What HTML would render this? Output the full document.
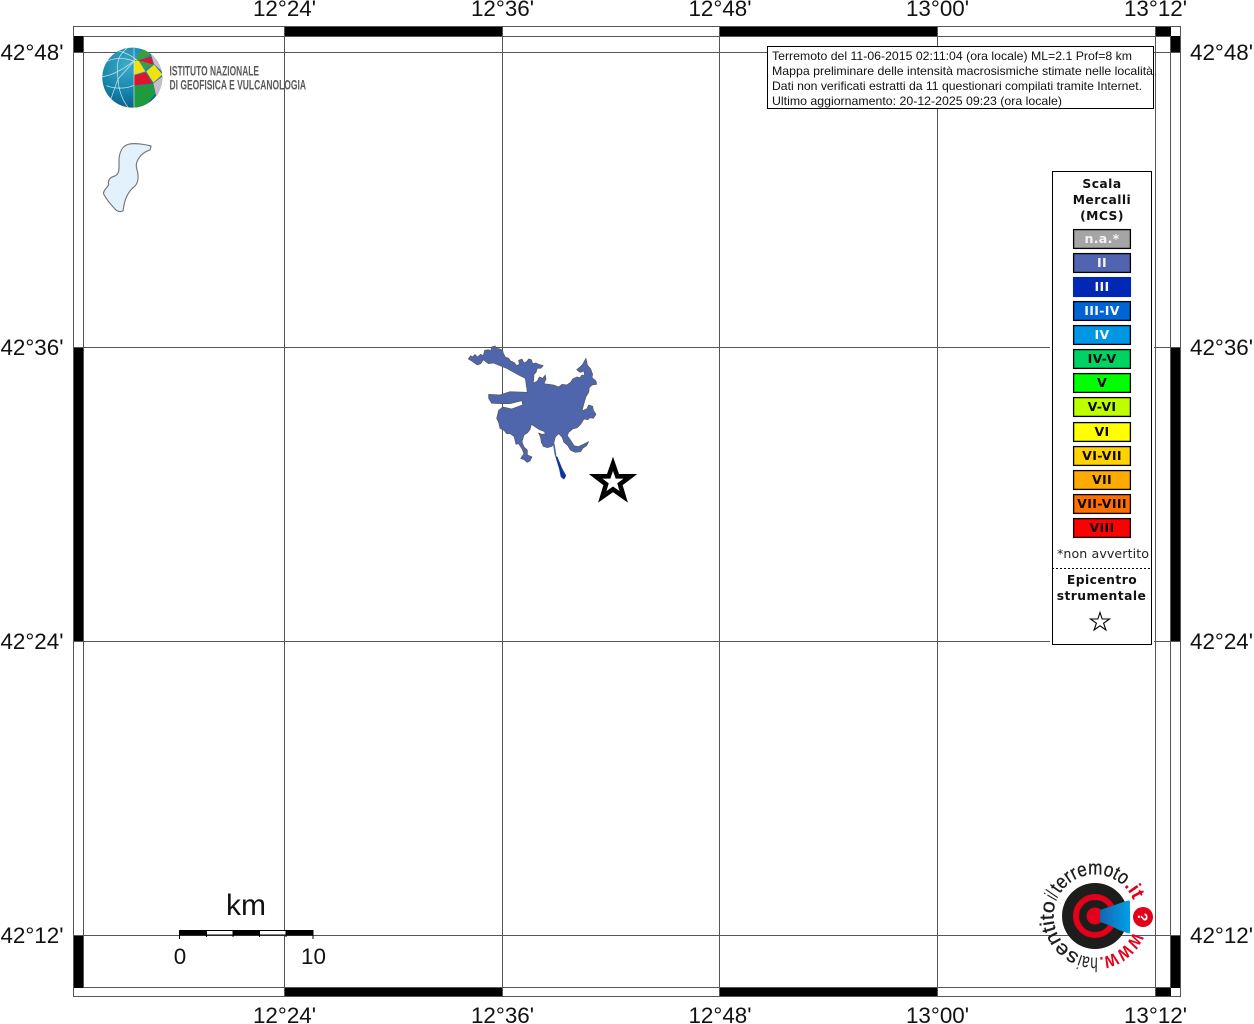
<!DOCTYPE html>
<html lang="it">
<head>
<meta charset="utf-8">
<title>Mappa intensità macrosismiche</title>
<style>
html,body{margin:0;padding:0;background:#fff;width:1254px;height:1024px;overflow:hidden}
svg{display:block;font-family:"Liberation Sans",sans-serif}
.lab{font-size:22.4px;fill:#111}
.info{font-size:12px;fill:#111}
.leg{font-family:"DejaVu Sans",sans-serif;font-weight:bold;font-size:12.3px;text-anchor:middle;letter-spacing:.45px}
.cell{font-family:"DejaVu Sans",sans-serif;font-weight:bold;font-size:12.6px;text-anchor:middle;letter-spacing:.3px}
</style>
</head>
<body>
<svg width="1254" height="1024" viewBox="0 0 1254 1024" xmlns="http://www.w3.org/2000/svg">
<defs>
<radialGradient id="gb" cx="40%" cy="30%" r="75%"><stop offset="0" stop-color="#3fabc8"/><stop offset=".6" stop-color="#1583ab"/><stop offset="1" stop-color="#0b5a85"/></radialGradient>
<linearGradient id="cone" x1="0" x2="1" y1="0" y2="0"><stop offset="0" stop-color="#1565b0"/><stop offset="1" stop-color="#00a0e6"/></linearGradient>
<clipPath id="gc"><circle cx="132.3" cy="77.6" r="30"/></clipPath>
<path id="a1" d="M1133.5 931.5 A41.5 41.5 0 0 1 1099.3 957.3"/>
<path id="a2" d="M1097.9 957.4 A41.5 41.5 0 0 1 1079.5 954.5"/>
<path id="a3" d="M1079.5 954.5 A41.5 41.5 0 0 1 1056.3 901.1"/>
<path id="a4" d="M1056.3 901.1 A41.5 41.5 0 0 1 1059.8 894"/>
<path id="a5" d="M1059.8 894 A41.5 41.5 0 0 1 1123.8 886.1"/>
<path id="a6" d="M1123.8 886.1 A41.5 41.5 0 0 1 1133.5 900.5"/>
</defs>

<!-- frame bars -->
<g fill="#000">
<rect x="284" y="26" width="218" height="10"/><rect x="720" y="26" width="217" height="10"/><rect x="1155" y="26" width="16" height="10"/>
<rect x="284" y="988" width="218" height="9"/><rect x="720" y="988" width="217" height="9"/><rect x="1155" y="988" width="16" height="9"/>
<rect x="74" y="36" width="9" height="16"/><rect x="74" y="347" width="9" height="294"/><rect x="74" y="935" width="9" height="53"/>
<rect x="1171" y="36" width="10" height="16"/><rect x="1171" y="347" width="10" height="294"/><rect x="1171" y="935" width="10" height="53"/>
</g>
<g fill="none" stroke="#555" stroke-width="1">
<rect x="73.5" y="26.5" width="1107" height="970"/>
<rect x="83.5" y="36.5" width="1087" height="951"/>
<path d="M284.5 26V997M502.5 26V997M719.5 26V997M937.5 26V997M1155.5 26V997"/>
<path d="M74 52.5H1181M74 347.5H1181M74 641.5H1181M74 935.5H1181"/>
</g>

<!-- coordinate labels -->
<g class="lab" text-anchor="middle">
<text x="284.5" y="16">12°24'</text><text x="502.5" y="16">12°36'</text><text x="720" y="16">12°48'</text><text x="937.5" y="16">13°00'</text><text x="1155.5" y="16">13°12'</text>
<text x="284.5" y="1023">12°24'</text><text x="502.5" y="1023">12°36'</text><text x="720" y="1023">12°48'</text><text x="937.5" y="1023">13°00'</text><text x="1155.5" y="1023">13°12'</text>
</g>
<g class="lab" text-anchor="end">
<text x="63.5" y="60">42°48'</text><text x="63.5" y="355">42°36'</text><text x="63.5" y="649">42°24'</text><text x="63.5" y="943">42°12'</text>
</g>
<g class="lab">
<text x="1190" y="60">42°48'</text><text x="1190" y="355">42°36'</text><text x="1190" y="649">42°24'</text><text x="1190" y="943">42°12'</text>
</g>

<!-- INGV logo -->
<circle cx="132.3" cy="77.6" r="30" fill="url(#gb)"/>
<g clip-path="url(#gc)">
<g transform="translate(98 44) scale(.3333)">
<path d="M108 52L135 15L160 30L125 48Z" fill="#3a9e3a"/>
<path d="M118 50L160 38L166 62L140 56Z" fill="#e0142c"/>
<path d="M158 28L195 65L195 85L168 60Z" fill="#c9bccb"/>
<path d="M108 52L122 50L142 82L108 92Z" fill="#f2e10f"/>
<path d="M125 50L166 62L142 74Z" fill="#3a9e3a"/>
<path d="M145 82L168 62L194 92L166 116Z" fill="#f2e10f"/>
<path d="M108 95L143 85L163 118L108 124Z" fill="#e0142c"/>
<path d="M166 118L196 95L192 135L174 155Z" fill="#c9bccb"/>
<path d="M108 126L166 120L172 150L140 190L108 195Z" fill="#1f9a3f"/>
<path d="M174 155L185 140L180 165Z" fill="#e0142c"/>
<g fill="none" stroke="#d8ecf1" stroke-width="2">
<path d="M108 10V195"/>
<path d="M108 52L60 105L35 175"/>
<path d="M88 12C60 35 55 50 60 105C62 140 75 170 90 190"/>
<path d="M108 52C80 40 45 40 22 55"/>
<path d="M115 45C85 70 45 95 12 98"/>
<path d="M108 124C85 135 50 135 25 125"/>
<path d="M60 20C90 28 105 38 118 50"/>
</g>
</g>
</g>
<text x="169.5" y="75.5" font-size="13.5" font-weight="bold" fill="#5a5a5a" textLength="89.5" lengthAdjust="spacingAndGlyphs">ISTITUTO NAZIONALE</text>
<text x="169.5" y="89.5" font-size="13.5" font-weight="bold" fill="#5a5a5a" textLength="136.5" lengthAdjust="spacingAndGlyphs">DI GEOFISICA E VULCANOLOGIA</text>

<!-- small lake -->
<path transform="translate(60 0) scale(.3333)" fill="#e2f1fb" stroke="#777" stroke-width="3.5" stroke-linejoin="round" d="M273 438C255 433 225 428 205 433C188 438 178 455 177 480C177 505 180 520 165 528C150 532 143 540 146 553C142 565 128 572 131 582C140 600 160 622 170 632C178 636 188 636 190 630C192 605 200 578 225 558C238 545 235 520 230 505C225 485 240 460 270 450Z"/>

<!-- intensity area -->
<g transform="translate(450 335) scale(.3333)">
<path fill="#4f66ad" stroke="#555" stroke-width="2" stroke-linejoin="round" d="M55 72L62 62L68 66L75 58L82 66L92 58L100 62L104 46L115 44L122 48L125 36L135 33L140 40L150 42L158 46L160 55L166 66L176 70L182 78L192 82L200 92L208 88L206 76L216 72L222 84L230 80L236 72L244 74L248 86L258 84L266 88L280 92L272 100L262 100L258 112L252 118L250 145L262 138L268 126L278 130L286 120L288 132L282 146L296 148L310 150L326 156L336 148L350 150L362 142L368 132L380 126L390 128L396 120L404 122L402 108L390 112L380 104L390 96L398 88L408 70L412 90L422 102L428 118L426 128L438 138L440 148L426 150L418 158L416 172L408 185L402 205L396 228L410 222L416 210L428 214L430 226L438 238L430 250L420 248L414 254L402 252L392 268L382 278L368 282L356 292L352 302L362 316L372 332L385 335L400 328L416 320L410 332L398 340L392 350L376 352L362 346L352 330L342 322L336 306L326 296L316 306L312 322L306 334L292 338L280 334L274 322L272 308L266 294L276 298L288 296L280 288L268 284L256 276L244 268L240 284L232 294L222 300L216 320L222 336L232 345L232 360L246 366L240 378L232 382L222 374L212 370L222 356L216 342L206 326L198 328L192 304L180 296L170 296L162 286L150 280L146 262L140 250L146 226L158 216L185 222L218 210L216 197L180 206L155 206L125 205L116 190L116 178L150 180L180 170L232 172L226 130L210 122L195 114L170 100L150 92L130 84L115 86L100 74L92 86L82 90L65 78Z"/>
<path fill="none" stroke="#4f66ad" stroke-width="5" d="M311 325L317 362"/>
<path fill="#0a35a8" stroke="#14284f" stroke-width="1" d="M316 362L322 366L336 400L348 422L342 433L333 426L328 402Z"/>
</g>

<!-- epicentre star -->
<path transform="translate(613 481) scale(.88) translate(-613 -481)" d="M613 461.5L617.9 475.6L632.7 475.7L620.9 484.7L625.2 499L613 490.5L600.8 499L605.1 484.7L593.3 475.7L608.1 475.6Z" fill="#fff" stroke="#000" stroke-width="5.3" stroke-linejoin="miter"/>

<!-- info box -->
<rect x="767.5" y="46.5" width="386" height="62" fill="#fff" stroke="#000" stroke-width="1"/>
<g class="info">
<text x="772" y="60" textLength="360" lengthAdjust="spacingAndGlyphs">Terremoto del 11-06-2015 02:11:04 (ora locale) ML=2.1 Prof=8 km</text>
<text x="772" y="75" textLength="381" lengthAdjust="spacingAndGlyphs">Mappa preliminare delle intensità macrosismiche stimate nelle località</text>
<text x="772" y="90" textLength="370" lengthAdjust="spacingAndGlyphs">Dati non verificati estratti da 11 questionari compilati tramite Internet.</text>
<text x="772" y="105" textLength="290" lengthAdjust="spacingAndGlyphs">Ultimo aggiornamento: 20-12-2025 09:23 (ora locale)</text>
</g>

<!-- legend -->
<rect x="1050" y="169" width="104" height="478" fill="#fff"/>
<rect x="1052.5" y="171.5" width="99" height="473" fill="#fff" stroke="#000" stroke-width="1"/>
<g class="leg" fill="#111">
<text x="1102" y="188">Scala</text><text x="1102" y="204">Mercalli</text><text x="1102" y="220">(MCS)</text>
</g>
<g stroke="#000" stroke-width="1.3">
<rect x="1073.6" y="229.6" width="56.8" height="18.8" fill="#a5a5a5"/>
<rect x="1073.6" y="253.6" width="56.8" height="18.8" fill="#5064af"/>
<rect x="1073.6" y="277.6" width="56.8" height="18.8" fill="#0028b4" stroke="#0028b4"/>
<rect x="1073.6" y="301.6" width="56.8" height="18.8" fill="#0064d2"/>
<rect x="1073.6" y="325.6" width="56.8" height="18.8" fill="#0096e6"/>
<rect x="1073.6" y="349.6" width="56.8" height="18.8" fill="#00d264"/>
<rect x="1073.6" y="373.6" width="56.8" height="18.8" fill="#00ff00"/>
<rect x="1073.6" y="397.6" width="56.8" height="18.8" fill="#beff00"/>
<rect x="1073.6" y="422.6" width="56.8" height="18.8" fill="#ffff00"/>
<rect x="1073.6" y="446.6" width="56.8" height="18.8" fill="#ffd200"/>
<rect x="1073.6" y="470.6" width="56.8" height="18.8" fill="#ffaa00"/>
<rect x="1073.6" y="494.6" width="56.8" height="18.8" fill="#ff6e00"/>
<rect x="1073.6" y="518.6" width="56.8" height="18.8" fill="#ff0000"/>
</g>
<g class="cell" fill="#f4f4f4">
<text x="1102" y="243">n.a.*</text><text x="1102" y="267">II</text><text x="1102" y="291">III</text><text x="1102" y="315">III-IV</text><text x="1102" y="339">IV</text>
</g>
<g class="cell" fill="#0a0a0a">
<text x="1102" y="363">IV-V</text><text x="1102" y="387">V</text><text x="1102" y="411">V-VI</text><text x="1102" y="436">VI</text><text x="1102" y="460">VI-VII</text><text x="1102" y="484">VII</text><text x="1102" y="508">VII-VIII</text><text x="1102" y="532">VIII</text>
</g>
<text x="1103" y="558" font-family="'DejaVu Sans',sans-serif" font-size="12.6" text-anchor="middle" fill="#222" textLength="92" lengthAdjust="spacing">*non avvertito</text>
<path d="M1052 568.5H1150" stroke="#000" stroke-width="1" stroke-dasharray="2 2"/>
<g class="leg" fill="#111">
<text x="1102" y="584">Epicentro</text><text x="1101.5" y="600">strumentale</text>
</g>
<path d="M1100 612.5L1102.2 619L1109.5 619L1103.6 623.2L1105.9 630L1100 625.8L1094.1 630L1096.4 623.2L1090.5 619L1097.8 619Z" fill="#fff" stroke="#000" stroke-width="1.1"/>

<!-- haisentito logo -->
<circle cx="1095" cy="916" r="33" fill="#1d1d1b"/>
<circle cx="1095" cy="916" r="19" fill="none" stroke="#e2001a" stroke-width="6"/>
<circle cx="1095" cy="916" r="8.5" fill="#e2001a"/>
<path d="M1100 910L1128 900.5Q1130 900 1130 903V932Q1130 934 1127 933L1119 930Q1110 925 1100 922Z" fill="url(#cone)"/>
<circle cx="1143" cy="917" r="10" fill="#e2001a"/>
<text x="1143" y="922" font-size="14" font-weight="bold" fill="#fff" text-anchor="middle" transform="rotate(90 1143 917)">?</text>
<g font-size="20">
<text fill="#e2001a" font-weight="bold" font-size="17" textLength="45" lengthAdjust="spacingAndGlyphs"><textPath href="#a1">WWW.</textPath></text>
<text fill="#1d1d1b" textLength="18" lengthAdjust="spacingAndGlyphs"><textPath href="#a2">hai</textPath></text>
<text fill="#1d1d1b" stroke="#1d1d1b" stroke-width=".3" textLength="63" lengthAdjust="spacingAndGlyphs"><textPath href="#a3">sentito</textPath></text>
<text fill="#1d1d1b" font-style="italic" textLength="6" lengthAdjust="spacingAndGlyphs"><textPath href="#a4">il</textPath></text>
<text fill="#1d1d1b" stroke="#1d1d1b" stroke-width=".3" textLength="73" lengthAdjust="spacingAndGlyphs"><textPath href="#a5">terremoto</textPath></text>
<text fill="#e2001a" font-weight="bold" textLength="17" lengthAdjust="spacingAndGlyphs"><textPath href="#a6">.it</textPath></text>
</g>

<!-- scale bar -->
<rect x="179.5" y="930.5" width="133.5" height="4.5" fill="#fff" stroke="#000" stroke-width="1"/>
<g fill="#000">
<rect x="179" y="930" width="28" height="5"/><rect x="233" y="930" width="27" height="5"/><rect x="286" y="930" width="27.5" height="5"/>
</g>
<path d="M179.5 930V939M206.5 930V937M233 930V937M259.5 930V937M286 930V937M313 930V939" stroke="#000" stroke-width="1" fill="none"/>
<text x="226" y="915" font-size="30" fill="#111">km</text>
<text x="180" y="964" class="lab" text-anchor="middle">0</text>
<text x="313.5" y="964" class="lab" text-anchor="middle">10</text>
</svg>
</body>
</html>
